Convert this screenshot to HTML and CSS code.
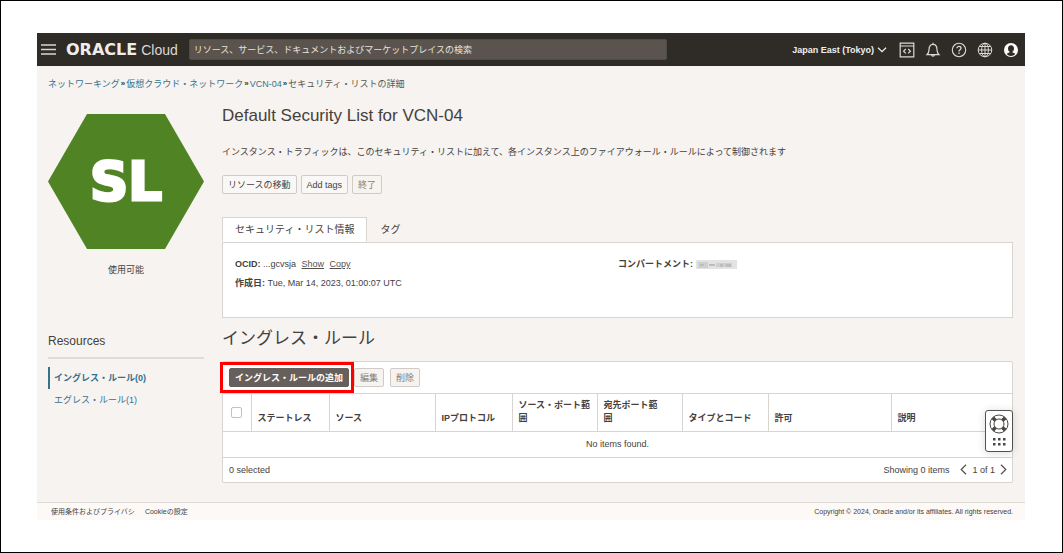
FILE: index.html
```html
<!DOCTYPE html>
<html lang="ja">
<head>
<meta charset="utf-8">
<title>Oracle Cloud - Default Security List for VCN-04</title>
<link rel="stylesheet" href="styles.css">
</head>
<body>
<div class="app">
  <header class="topbar">
    <button class="icon-btn menu" aria-label="Menu"><svg width="15" height="11" viewBox="0 0 15 11" fill="none" stroke="#d9d6d2" stroke-width="1.6"><path d="M0 1h15M0 5.5h15M0 10h15"/></svg></button>
    <a class="brand" href="#"><span class="brand-name">ORACLE</span><span class="brand-sub">Cloud</span></a>
    <input class="search" type="text" aria-label="検索" placeholder="リソース、サービス、ドキュメントおよびマーケットプレイスの検索">
    <div class="tools">
      <button class="region">Japan East (Tokyo)<svg width="10" height="6" viewBox="0 0 10 6" fill="none" stroke="#eee" stroke-width="1.3"><path d="M1 .7l4 4 4-4"/></svg></button>
      <button class="icon-btn" aria-label="Developer tools"><svg width="16" height="16" viewBox="0 0 16 16" fill="none" stroke="#dcd9d5" stroke-width="1.2"><path d="M1.2 1.2h13.6v13.6H1.2zM1.2 4h13.6M6.8 7L4.6 9.2l2.2 2.2M9.2 7l2.2 2.2-2.2 2.2"/></svg></button>
      <button class="icon-btn" aria-label="Notifications"><svg width="16" height="16" viewBox="0 0 16 16" fill="none" stroke="#dcd9d5" stroke-width="1.2"><path d="M8 .8v1.6M2 12.7c1.5-1.4 2-2.7 2-5 0-3.4 1.300-5.300 4-5.300s4 1.900 4 5.300c0 2.300.5 3.600 2 5zM6.500 13c.2 1.600 2.800 1.600 3 0"/></svg></button>
      <button class="icon-btn" aria-label="Help"><svg width="16" height="16" viewBox="0 0 16 16" fill="none" stroke="#dcd9d5" stroke-width="1.1"><circle cx="8" cy="8" r="6.700"/><path stroke-width="1.300" d="M6 6.300c0-2.500 4-2.400 4-.1 0 1.500-2 1.500-2 3.200M8 10.600v1.300"/></svg></button>
      <button class="icon-btn" aria-label="Language"><svg width="16" height="16" viewBox="0 0 16 16" fill="none" stroke="#dcd9d5"><circle cx="8" cy="8" r="6.800"/><ellipse cx="8" cy="8" rx="3.400" ry="6.800"/><path d="M8 1v14M1 8h14M2.200 4.500h11.600M2.200 11.500h11.600"/></svg></button>
      <button class="icon-btn" aria-label="Profile"><svg width="16" height="16" viewBox="0 0 16 16"><circle cx="8" cy="8" r="7" fill="#fff"/><path fill="#2f2c28" d="M8 3.200c2 0 3 1.300 3 3.200 0 1.400-.6 2.600-1.500 3.200v1c1.200.3 2.200.7 2.800 1.300-1.200 1.300-2.600 2-4.300 2s-3.100-.7-4.300-2c.6-.6 1.600-1 2.800-1.300v-1C5.600 9 5 7.800 5 6.400c0-1.900 1-3.200 3-3.200z"/></svg></button>
    </div>
  </header>

  <nav class="crumbs" aria-label="Breadcrumb">
    <a href="#">ネットワーキング</a><b>»</b><a href="#">仮想クラウド・ネットワーク</a><b>»</b><a href="#">VCN-04</a><b>»</b><span>セキュリティ・リストの詳細</span>
  </nav>

  <div class="content">
    <aside class="side">
      <div class="badge">SL</div>
      <p class="state">使用可能</p>
      <h2 class="side-title">Resources</h2>
      <ul class="side-list">
        <li><a class="current" href="#">イングレス・ルール(0)</a></li>
        <li><a href="#">エグレス・ルール(1)</a></li>
      </ul>
    </aside>

    <main class="main">
      <h1 class="title">Default Security List for VCN-04</h1>
      <p class="lead">インスタンス・トラフィックは、このセキュリティ・リストに加えて、各インスタンス上のファイアウォール・ルールによって制御されます</p>
      <div class="actions">
        <button class="btn">リソースの移動</button>
        <button class="btn">Add tags</button>
        <button class="btn" disabled>終了</button>
      </div>

      <div class="tabs" role="tablist">
        <button class="tab active" role="tab" aria-selected="true">セキュリティ・リスト情報</button>
        <button class="tab" role="tab" aria-selected="false">タグ</button>
      </div>
      <section class="panel">
        <div>
          <p class="fact"><b>OCID:</b> ...gcvsja <a href="#">Show</a> <a href="#">Copy</a></p>
          <p class="fact"><b>作成日:</b> Tue, Mar 14, 2023, 01:00:07 UTC</p>
        </div>
        <div>
          <p class="fact"><b>コンパートメント:</b> <svg class="masked" width="41" height="10" viewBox="0 0 41 10" aria-hidden="true"><path fill="#e3e3e3" d="M0 0h41v9H0z"/><path fill="#cfcfcf" d="M2 2h10v6H2zM20 3h16v4H20z"/><path fill="#bdbdbd" d="M4 4h4v2H4zM13 4h6v2h-6zM24 4h3v3h-3zM30 4h5v3h-5z"/></svg></p>
        </div>
      </section>

      <h2 class="section-title">イングレス・ルール</h2>
      <section class="card">
        <div class="toolbar">
          <div class="callout"><button class="btn primary">イングレス・ルールの追加</button></div>
          <button class="btn muted" disabled>編集</button>
          <button class="btn muted" disabled>削除</button>
        </div>
        <table class="rules">
          <colgroup><col class="c-check"><col class="c-state"><col class="c-source"><col class="c-proto"><col class="c-port"><col class="c-port"><col class="c-type"><col class="c-allow"><col></colgroup>
          <thead>
            <tr><th class="check"><input type="checkbox" aria-label="すべて選択"></th><th>ステートレス</th><th>ソース</th><th>IPプロトコル</th><th>ソース・ポート範囲</th><th>宛先ポート範<br>囲</th><th>タイプとコード</th><th>許可</th><th>説明</th></tr>
          </thead>
          <tbody><tr><td colspan="9">No items found.</td></tr></tbody>
        </table>
        <div class="pager">
          <span>0 selected</span>
          <span class="showing">Showing 0 items</span>
          <button class="icon-btn" aria-label="Previous"><svg width="7" height="11" viewBox="0 0 7 11" fill="none" stroke="#55504c" stroke-width="1.200"><path d="M6 .8L1.200 5.500 6 10.200"/></svg></button>
          <span>1 of 1</span>
          <button class="icon-btn" aria-label="Next"><svg width="7" height="11" viewBox="0 0 7 11" fill="none" stroke="#55504c" stroke-width="1.200"><path d="M1 .8l4.800 4.700L1 10.200"/></svg></button>
        </div>
        <button class="support" aria-label="Support">
          <svg width="20" height="34" viewBox="0 0 20 34" fill="none" stroke="#4a4643"><circle cx="10" cy="10" r="9"/><circle cx="10" cy="10" r="5"/><path stroke-width="3.600" d="M3.800 3.800l2.700 2.700M16.200 3.800l-2.700 2.700M3.800 16.200l2.700-2.700M16.200 16.200l-2.700-2.700"/><path fill="#4a4643" stroke="none" d="M4 24h2.500v2.500H4zM9 24h2.500v2.500H9zM14 24h2.500v2.500H14zM4 29h2.500v2.500H4zM9 29h2.500v2.500H9zM14 29h2.500v2.500H14z"/></svg>
        </button>
      </section>
    </main>
  </div>

  <footer class="footer">
    <a href="#">使用条件およびプライバシ</a><a href="#">Cookieの設定</a>
    <span class="legal">Copyright © 2024, Oracle and/or its affiliates. All rights reserved.</span>
  </footer>
</div>
</body>
</html>
```
FILE: styles.css
```css
* { box-sizing: border-box; }
body, h1, h2, p, ul { margin: 0; padding: 0; }
body {
  min-height: 100vh;
  padding: 32px 37px 32px 36px;
  border: 1px solid #000;
  background: #fff;
  color: #45413d;
  font: 9px/18px "Liberation Sans", "Noto Sans CJK JP", sans-serif;
}
button, input { font: inherit; color: inherit; }
button { cursor: pointer; }
a { color: #38718c; text-decoration: none; }
svg { display: block; flex: none; }
.app { background: #f6f3f0; }

.topbar {
  display: flex;
  align-items: center;
  height: 33px;
  padding: 0 6px 0 4px;
  background: #2f2c28;
  color: #f1efed;
}
.icon-btn { display: flex; padding: 0; border: 0; background: none; }
.brand { display: flex; align-items: center; gap: 4px; margin-left: 10px; color: #efedeb; }
.brand-name { font: bold 16px/18px "DejaVu Sans", sans-serif; }
.brand-sub { font-size: 14px; color: #dcd9d5; }
.search {
  flex: 0 1 478px;
  min-width: 0;
  height: 21px;
  margin-left: 11px;
  padding: 0 4px;
  border: 1px solid #514b45;
  border-radius: 2px;
  background: #5b544e;
}
.search::placeholder { color: #e6e2de; opacity: 1; }
.tools { display: flex; align-items: center; gap: 10px; margin-left: auto; }
.region {
  display: flex;
  align-items: center;
  gap: 3px;
  margin-right: 2px;
  padding: 0;
  border: 0;
  background: none;
  font-weight: bold;
}

.crumbs { display: flex; gap: 1px; padding: 9px 11px 0; color: #5b5652; }
.crumbs b { color: #3a3632; font-size: 8px; }

.content { display: grid; grid-template-columns: 156px minmax(0, 1fr); gap: 18px; padding: 0 12px 19px 11px; }
.side { padding-top: 21px; }
.badge {
  display: grid;
  place-items: center;
  height: 135px;
  clip-path: polygon(25% 0, 75% 0, 100% 50%, 75% 100%, 25% 100%, 0 50%);
  background: #4f8323;
  color: #fff;
  font: bold 53px/60px "DejaVu Sans", sans-serif;
  -webkit-text-stroke: 3px #fff;
}
.state { margin-top: 12px; text-align: center; }
.side-title {
  margin-top: 52px;
  padding-bottom: 6px;
  border-bottom: 2px solid #dfdbd7;
  font-size: 12px;
  line-height: 20px;
  font-weight: normal;
}
.side-list { margin-top: 8px; list-style: none; }
.side-list a { display: block; padding-left: 4px; border-left: 2px solid transparent; line-height: 22px; }
.side-list .current { border-color: #38718c; font-weight: bold; }

.title { margin-top: 11px; font-size: 17px; line-height: 24px; font-weight: normal; }
.lead { margin-top: 15px; }
.actions { display: flex; gap: 4px; margin-top: 14px; }
.btn {
  height: 19px;
  padding: 0 5px;
  border: 1px solid #d0cbc6;
  border-radius: 2px;
  background: #faf8f6;
  line-height: 16px;
}
.btn:disabled { color: #827d78; background: #f6f3f0; }
.btn.primary { border-color: #665f5b; background: #665f5b; color: #fff; font-weight: bold; }

.tabs { display: flex; margin-top: 23px; }
.tab {
  height: 25px;
  padding: 0 12px;
  border: 1px solid transparent;
  background: none;
  font-size: 10px;
}
.tab.active { position: relative; margin-bottom: -1px; border-color: #d8d4d0; border-bottom-color: #fff; background: #fff; }
.panel {
  display: grid;
  grid-template-columns: 383px minmax(0, 1fr);
  padding: 12px 12px 24px;
  border: 1px solid #d8d4d0;
  background: #fff;
}
.fact { margin-bottom: 1px; }
.fact a { margin-left: 3px; color: #55504c; text-decoration: underline; }
.masked { display: inline-block; vertical-align: middle; }

.section-title { margin-top: 8px; font-size: 17px; line-height: 26px; font-weight: normal; }
.card { position: relative; margin-top: 9px; border: 1px solid #d8d4d0; border-radius: 2px; background: #fff; }
.toolbar { display: flex; align-items: center; gap: 6px; height: 32px; border-bottom: 1px solid #d8d4d0; }
.callout { margin: 0 -6px 0 -3px; padding: 3px 2px 3px 6px; border: 3px solid #f00; z-index: 1; }
.callout .btn { display: block; }

.rules { width: 100%; border-collapse: collapse; table-layout: fixed; line-height: 13px; }
.c-check { width: 28px; }
.c-state { width: 78px; }
.c-source { width: 106px; }
.c-proto { width: 77px; }
.c-port { width: 85px; }
.c-type { width: 86px; }
.c-allow { width: 123px; }
.rules th {
  height: 37px;
  padding: 0 6px 6px;
  border-right: 1px solid #d8d4d0;
  text-align: left;
  vertical-align: bottom;
}
.rules th:last-child { border-right: 0; }
.rules .check { padding: 0; text-align: center; vertical-align: middle; }
.check input {
  appearance: none;
  display: block;
  width: 11px;
  height: 11px;
  margin: 0 auto;
  border: 1px solid #c6c1bc;
  border-radius: 2px;
  background: #fff;
}
.rules td { height: 26px; padding: 0; border-top: 1px solid #d8d4d0; border-bottom: 1px solid #d8d4d0; text-align: center; }
.pager { display: flex; align-items: center; gap: 5px; height: 24px; padding: 0 5px 0 6px; }
.showing { margin: 0 6px 0 auto; }
.support {
  position: absolute;
  top: 48px;
  right: -1px;
  display: flex;
  padding: 3px;
  border: 1px solid #55504c;
  border-radius: 3px;
  background: #fff;
  box-shadow: 0 1px 8px rgba(0, 0, 0, .15);
}

.footer {
  display: flex;
  gap: 10px;
  padding: 0 12px 0 14px;
  border-top: 1px solid #dfdbd7;
  background: #fcf9f7;
  font-size: 7px;
  line-height: 17px;
}
.footer a { color: inherit; }
.legal { margin-left: auto; }
```
